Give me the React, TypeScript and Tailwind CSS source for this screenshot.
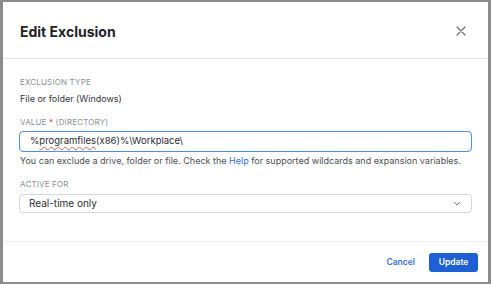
import React from "react";

export default function App() {
  return (
    <div className="w-[491px] h-[284px] bg-[#8c8c8c] pt-[2px] pl-[3px] pr-[3px] pb-[2px]" style={{ fontFamily: "Inter, 'Noto Sans', sans-serif" }}>
      <div className="w-full h-full bg-white flex flex-col">
        <div className="h-[57px] flex items-center justify-between pl-[17px] pr-[22px] pt-[2px] border-b border-[#e4e6ea]">
          <h1 className="text-[14px] font-bold text-[#1f2328]">Edit Exclusion</h1>
          <svg width="10" height="10" viewBox="0 0 10 10" className="text-[#6b6f76]">
            <path d="M1 1L9 9M9 1L1 9" stroke="currentColor" strokeWidth="1.2" strokeLinecap="round" />
          </svg>
        </div>
        <div className="flex-1 px-[16px] pt-[18px]">
          <div className="text-[8px] text-[#8a8f98] tracking-[0.02em] leading-[10px] pl-[1px]">EXCLUSION TYPE</div>
          <div className="text-[9px] text-[#33363b] mt-[6px] leading-[12px] pl-[1px]">File or folder (Windows)</div>
          <div className="text-[8px] text-[#8a8f98] tracking-[0.02em] leading-[10px] mt-[12px] pl-[1px]">
            VALUE <span className="text-[#e0393e]">*</span> (DIRECTORY)
          </div>
          <div className="mt-[4px] h-[21px] border border-[#4a90e8] rounded-[4px] flex items-center pl-[10px] text-[9.5px] text-[#2a2d31]">
            %<span className="underline decoration-wavy decoration-[#e05a5a] decoration-[0.5px] underline-offset-2">programfiles</span>(x86)%\Workplace\
          </div>
          <div className="text-[9px] text-[#4b4f55] mt-[3px] leading-[12px] pl-[1px] whitespace-nowrap">
            You can exclude a drive, folder or file. Check the <span className="text-[#2f6fd6]">Help</span> for supported wildcards and expansion variables.
          </div>
          <div className="text-[8px] text-[#8a8f98] tracking-[0.02em] leading-[10px] mt-[12px] pl-[1px]">ACTIVE FOR</div>
          <div className="mt-[5px] h-[19px] border border-[#d3d6db] rounded-[4px] flex items-center justify-between pl-[9px] pr-[10px] text-[10px] text-[#2a2d31]">
            <span>Real-time only</span>
            <svg width="8" height="5" viewBox="0 0 8 5" className="text-[#7a7e85]">
              <path d="M1 1L4 4L7 1" stroke="currentColor" strokeWidth="1" fill="none" />
            </svg>
          </div>
        </div>
        <div className="h-[41px] border-t border-[#eceef1] flex items-center justify-end pr-[10px] gap-[14px]">
          <span className="text-[8.5px] font-semibold text-[#3a6fd8]">Cancel</span>
          <button className="h-[19px] w-[49px] bg-[#1e5fd3] text-white text-[8.5px] font-semibold rounded-[3px]">Update</button>
        </div>
      </div>
    </div>
  );
}
